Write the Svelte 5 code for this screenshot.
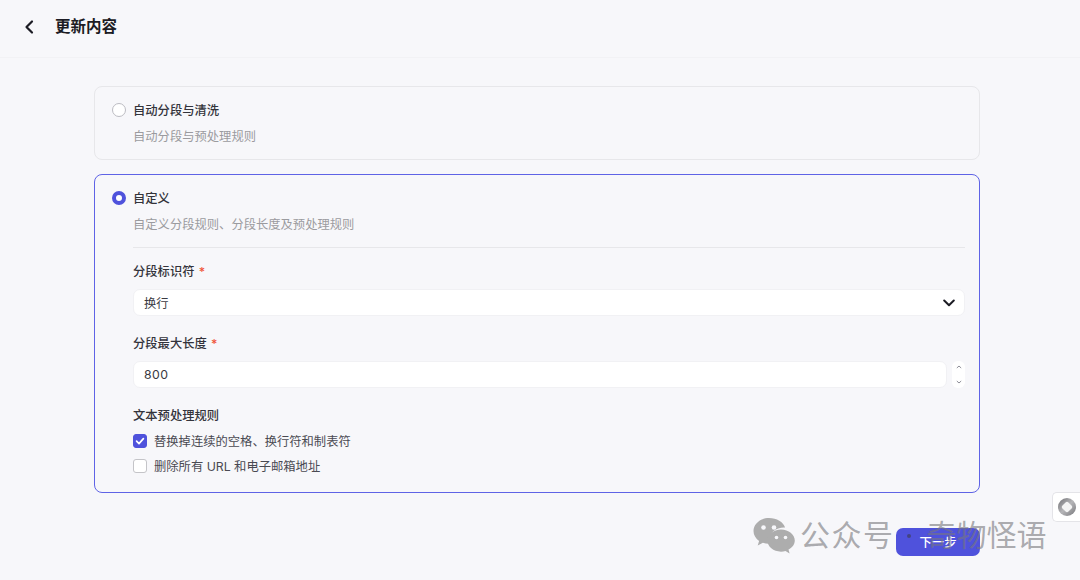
<script>
  const rules = [
    { label: '替换掉连续的空格、换行符和制表符', checked: true },
    { label: '删除所有 URL 和电子邮箱地址', checked: false }
  ]
</script>

<div class="page">
  <header>
    <svg class="back" width="12" height="16" viewBox="0 0 12 16" fill="none">
      <path d="M9 2.500 3.500 8 9 13.500" stroke="#1c1c24" stroke-width="2.200" stroke-linecap="round" stroke-linejoin="round" />
    </svg>
    <h1>更新内容</h1>
  </header>

  <main>
    <section class="card">
      <div class="head">
        <span class="radio"></span>
        <span class="title">自动分段与清洗</span>
      </div>
      <p class="desc">自动分段与预处理规则</p>
    </section>

    <section class="card active">
      <div class="head">
        <span class="radio on"></span>
        <span class="title">自定义</span>
      </div>
      <p class="desc">自定义分段规则、分段长度及预处理规则</p>
      <div class="divider"></div>

      <div class="fields">
        <div class="field-label first">分段标识符 <em>*</em></div>
        <div class="select">
          <span>换行</span>
          <svg width="12" height="8" viewBox="0 0 12 8" fill="none">
            <path d="M1.200 1.500 6 6.200l4.800-4.700" stroke="#1c1c24" stroke-width="2" stroke-linecap="round" stroke-linejoin="round" />
          </svg>
        </div>

        <div class="field-label second">分段最大长度 <em>*</em></div>
        <div class="number">
          <div class="input">800</div>
          <div class="spin">
            <svg width="6" height="4" viewBox="0 0 6 4" fill="none"><path d="M.8 3 3 1l2.200 2" stroke="#8d8d96" stroke-width="1" /></svg>
            <svg width="6" height="4" viewBox="0 0 6 4" fill="none"><path d="M.8 1 3 3l2.200-2" stroke="#8d8d96" stroke-width="1" /></svg>
          </div>
        </div>

        <div class="field-label third">文本预处理规则</div>
        <ul>
          {#each rules as rule}
            <li>
              <span class="check" class:checked={rule.checked}>
                {#if rule.checked}
                  <svg width="10" height="10" viewBox="0 0 10 10" fill="none">
                    <path d="M1.600 5.200 4 7.600l4.400-5" stroke="#fff" stroke-width="1.700" stroke-linecap="round" stroke-linejoin="round" />
                  </svg>
                {/if}
              </span>
              {rule.label}
            </li>
          {/each}
        </ul>
      </div>
    </section>

    <div class="actions">
      <button>下一步</button>
    </div>
  </main>

  <div class="float-tool">
    <svg width="18" height="18" viewBox="0 0 18 18">
      <defs>
        <linearGradient id="ring" x1="0" y1="0" x2="1" y2="1">
          <stop offset="0" stop-color="#6f6f73" />
          <stop offset="0.5" stop-color="#b5b5b8" />
          <stop offset="1" stop-color="#77777b" />
        </linearGradient>
      </defs>
      <circle cx="9" cy="9" r="9" fill="url(#ring)" />
      <rect x="4.800" y="4.800" width="8.400" height="8.400" rx="2" fill="#f4f4f4" transform="rotate(45 9 9)" />
    </svg>
  </div>

  <div class="watermark">
    <svg class="wechat" width="42" height="36" viewBox="0 0 42 36">
      <path fill="#adadad" d="M16 0C7.400 0 .5 5.800.5 13c0 4 2.200 7.600 5.600 10l-1.400 4.600 5.200-2.800c1.800.6 3.800 1 5.900 1h1.300c-.5-1.400-.7-2.700-.7-4.100 0-6.800 6.500-12.200 14.600-12.200h1.100C30.300 4 23.800 0 16 0Z" />
      <path fill="#adadad" d="M28 11.500c-7.600 0-13.600 5-13.600 11.100S20.400 33.700 28 33.700c1.600 0 3.100-.2 4.500-.7l4.100 2.500-1.100-3.900c3.900-2 6.300-5.300 6.300-9 0-6.100-6.100-11.100-13.700-11.100Z" />
      <circle cx="10.500" cy="9.500" r="2.300" fill="#f7f7fa" />
      <circle cx="21" cy="9.500" r="2.300" fill="#f7f7fa" />
      <circle cx="23.500" cy="19.500" r="1.800" fill="#f7f7fa" />
      <circle cx="32.500" cy="19.500" r="1.800" fill="#f7f7fa" />
    </svg>
    <span class="wm-text wide">公众号</span>
    <span class="wm-dot"></span>
    <span class="wm-text">奇物怪语</span>
  </div>
</div>

<style>
  :global(body) {
    margin: 0;
    background: #f7f7fa;
  }

  .page {
    position: relative;
    width: 1080px;
    height: 580px;
    overflow: hidden;
    background: #f7f7fa;
    color: #2c2c35;
    font-family: Inter, "Noto Sans CJK SC", sans-serif;
    font-size: 12.300px;
  }

  header {
    height: 58px;
    box-sizing: border-box;
    display: flex;
    align-items: center;
    padding: 0 0 4px 23px;
    gap: 20px;
    border-bottom: 1px solid #f2f2f5;
  }

  h1 {
    margin: -3px 0 0;
    font-size: 15.500px;
    font-weight: 600;
    color: #1c1c24;
  }

  main {
    width: 886px;
    margin-left: 94px;
    padding-top: 28px;
  }

  .card {
    box-sizing: border-box;
    height: 74px;
    padding: 13px 14px 0 17px;
    border: 1px solid #e7e7ea;
    border-radius: 8px;
    margin-bottom: 14px;
  }

  .card.active {
    height: 319px;
    border-color: #5f63e6;
  }

  .head {
    display: flex;
    align-items: center;
    gap: 7px;
    height: 20px;
  }

  .radio {
    box-sizing: border-box;
    width: 14px;
    height: 14px;
    border-radius: 50%;
    background: #fff;
    border: 1px solid #bcbcc2;
  }

  .radio.on {
    border: 4px solid #4f52dc;
  }

  .title {
    margin-top: -1px;
    font-weight: 500;
    color: #33333b;
  }

  .desc {
    margin: 7px 0 0 21px;
    height: 20px;
    line-height: 20px;
    color: #9b9b9f;
  }

  .divider {
    height: 1px;
    margin: 12px 0 0 21px;
    background: #e7e7ea;
  }

  .fields {
    margin-left: 21px;
  }

  .field-label {
    height: 20px;
    line-height: 20px;
    font-weight: 500;
    color: #33333b;
  }

  .field-label.first {
    margin-top: 14px;
  }

  .field-label.second {
    margin-top: 18px;
  }

  .field-label.third {
    margin-top: 18px;
  }

  em {
    font-style: normal;
    color: #f0563a;
    margin-left: 1px;
  }

  .select,
  .input {
    box-sizing: border-box;
    height: 27px;
    margin-top: 7px;
    padding: 0 10px;
    display: flex;
    align-items: center;
    background: #fff;
    border: 1px solid #f1f1f4;
    border-radius: 7px;
    color: #3a3a42;
  }

  .select {
    justify-content: space-between;
    padding-right: 9px;
  }

  .number {
    display: flex;
    gap: 5px;
  }

  .input {
    flex: 1;
    letter-spacing: 0.5px;
  }

  .spin {
    box-sizing: border-box;
    width: 13px;
    height: 27px;
    margin-top: 7px;
    padding: 4px 0;
    display: flex;
    flex-direction: column;
    justify-content: space-between;
    align-items: center;
    background: #fff;
    border-radius: 6px;
  }

  ul {
    list-style: none;
    margin: 2px 0 0;
    padding: 0;
  }

  li {
    display: flex;
    align-items: center;
    gap: 7px;
    height: 25px;
    color: #4a4a52;
  }

  .check {
    box-sizing: border-box;
    width: 14px;
    height: 14px;
    display: flex;
    align-items: center;
    justify-content: center;
    background: #fff;
    border: 1px solid #c4c4c8;
    border-radius: 3px;
  }

  .check.checked {
    background: #4f52dc;
    border-color: #4f52dc;
  }

  .actions {
    display: flex;
    justify-content: flex-end;
    margin-top: 35px;
  }

  button {
    width: 84px;
    height: 28px;
    border: none;
    border-radius: 7px;
    background: #4f52dc;
    color: #fff;
    font: inherit;
    font-weight: 500;
  }

  .float-tool {
    position: absolute;
    right: 0;
    top: 492px;
    width: 28px;
    height: 30px;
    display: flex;
    align-items: center;
    justify-content: center;
    background: #fff;
    border: 1px solid #e4e4e8;
    border-right: none;
    border-radius: 5px 0 0 5px;
    box-sizing: border-box;
  }

  .watermark {
    position: absolute;
    left: 753px;
    top: 518px;
    display: flex;
    align-items: center;
    height: 36px;
    pointer-events: none;
  }

  .wechat {
    margin-right: 5px;
  }

  .wm-text {
    margin-bottom: 6px;
    font-family: "Noto Sans CJK SC", sans-serif;
    font-size: 30px;
    line-height: 36px;
    color: rgba(120, 120, 125, 0.62);
    font-weight: 400;
  }

  .wm-text.wide {
    letter-spacing: 1.500px;
  }

  .wm-dot {
    width: 4px;
    height: 4px;
    border-radius: 50%;
    margin: 0 16px 0 12px;
    background: rgba(60, 60, 70, 0.6);
  }
</style>
